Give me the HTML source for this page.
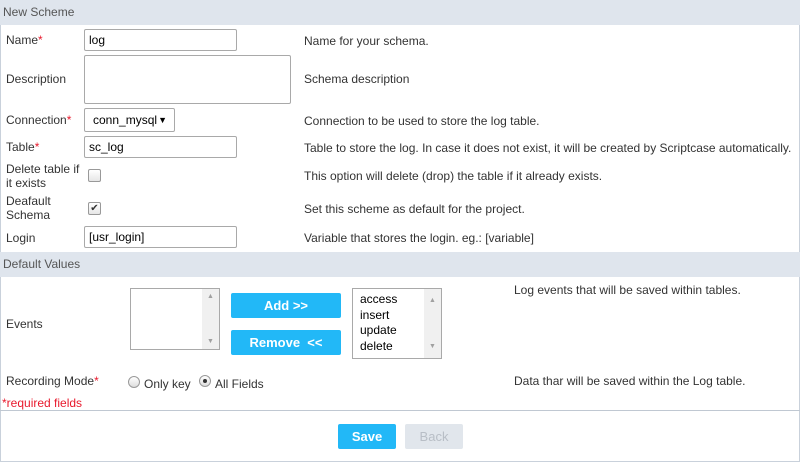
<!DOCTYPE html>
<html><head><style>
body{margin:0;width:800px;height:463px;background:#fff;font-family:"Liberation Sans",Arial,sans-serif;font-size:12px;color:#333;position:relative;overflow:hidden}
.a{position:absolute;white-space:nowrap}
.hd{position:absolute;left:0;width:800px;height:25px;background:#dfe5ed;color:#555;line-height:25px;padding-left:3px;box-sizing:border-box}
.in{position:absolute;border:1px solid #a9a9a9;border-radius:2px;background:#fff;box-sizing:border-box;padding-left:4px;color:#000}
.r{color:#e8192c}
.cb{position:absolute;width:11px;height:11px;border:1px solid #999;border-radius:2px;background:linear-gradient(#fff,#e6e6e6)}
.btn{position:absolute;background:#22b8f7;color:#fff;font-weight:bold;text-align:center;border-radius:2px;font-size:13px}
.lb{position:absolute;border:1px solid #a9a9a9;background:#fff;box-sizing:border-box;overflow:hidden}
.sb{position:absolute;right:0;top:0;bottom:0;width:17px;background:#f0f0f0;color:#a0a0a0;font-size:7px;text-align:center}
.up{position:absolute;top:4px;left:0;right:0}
.dn{position:absolute;bottom:4px;left:0;right:0}
.rad{position:absolute;width:10px;height:10px;border:1px solid #999;border-radius:50%;background:linear-gradient(#fff,#ddd)}
</style></head><body>
<div style="position:absolute;left:0;top:0;width:798px;height:461px;border-right:1px solid #c9d1db;border-bottom:1px solid #c9d1db;border-left:1px solid #c9d1db"></div>
<div class="hd" style="top:0">New Scheme</div>
<div class="a" style="left:6px;top:33px">Name<span class="r">*</span></div>
<div class="in" style="left:84px;top:29px;width:153px;height:22px;line-height:20px">log</div>
<div class="a" style="left:304px;top:34px">Name for your schema.</div>
<div class="a" style="left:6px;top:72px">Description</div>
<div class="in" style="left:84px;top:55px;width:207px;height:49px"></div>
<div class="a" style="left:304px;top:72px">Schema description</div>
<div class="a" style="left:6px;top:113px">Connection<span class="r">*</span></div>
<div class="in" style="left:84px;top:108px;width:91px;height:24px;line-height:22px;padding-left:8px">conn_mysql<span style="position:absolute;right:7px;top:0;font-size:9px">▼</span></div>
<div class="a" style="left:304px;top:114px">Connection to be used to store the log table.</div>
<div class="a" style="left:6px;top:140px">Table<span class="r">*</span></div>
<div class="in" style="left:84px;top:136px;width:153px;height:22px;line-height:20px">sc_log</div>
<div class="a" style="left:304px;top:141px">Table to store the log. In case it does not exist, it will be created by Scriptcase automatically.</div>
<div class="a" style="left:6px;top:162px;line-height:14px">Delete table if<br>it exists</div>
<div class="cb" style="left:88px;top:169px"></div>
<div class="a" style="left:304px;top:169px">This option will delete (drop) the table if it already exists.</div>
<div class="a" style="left:6px;top:194px;line-height:14px">Deafault<br>Schema</div>
<div class="cb" style="left:88px;top:202px;font-size:10px;line-height:11px;text-align:center;color:#333">✔</div>
<div class="a" style="left:304px;top:202px">Set this scheme as default for the project.</div>
<div class="a" style="left:6px;top:231px">Login</div>
<div class="in" style="left:84px;top:226px;width:153px;height:22px;line-height:20px">[usr_login]</div>
<div class="a" style="left:304px;top:231px">Variable that stores the login. eg.: [variable]</div>
<div class="hd" style="top:252px">Default Values</div>
<div class="a" style="left:6px;top:317px">Events</div>
<div class="lb" style="left:130px;top:288px;width:90px;height:62px"><div class="sb"><div class="up">▲</div><div class="dn">▼</div></div></div>
<div class="btn" style="left:231px;top:293px;width:110px;height:25px;line-height:25px">Add &gt;&gt;</div>
<div class="btn" style="left:231px;top:330px;width:110px;height:25px;line-height:25px">Remove &nbsp;&lt;&lt;</div>
<div class="lb" style="left:352px;top:288px;width:90px;height:71px;color:#000;line-height:15.5px"><div style="position:absolute;left:7px;top:3px">access<br>insert<br>update<br>delete</div><div class="sb"><div class="up">▲</div><div class="dn">▼</div></div></div>
<div class="a" style="left:514px;top:283px">Log events that will be saved within tables.</div>
<div class="a" style="left:6px;top:374px">Recording Mode<span class="r">*</span></div>
<div class="rad" style="left:128px;top:376px"></div>
<div class="a" style="left:144px;top:377px">Only key</div>
<div class="rad" style="left:199px;top:375px"><div style="width:4px;height:4px;border-radius:50%;background:#333;margin:3px"></div></div>
<div class="a" style="left:215px;top:377px">All Fields</div>
<div class="a" style="left:514px;top:374px">Data thar will be saved within the Log table.</div>
<div class="a r" style="left:2px;top:396px">*required fields</div>
<div style="position:absolute;left:0;top:410px;width:800px;height:1px;background:#c0c8d2"></div>
<div class="btn" style="left:338px;top:424px;width:58px;height:25px;line-height:25px">Save</div>
<div class="btn" style="left:405px;top:424px;width:58px;height:25px;line-height:25px;background:#e1e6ec;color:#b8bec6;font-weight:normal">Back</div>
</body></html>
